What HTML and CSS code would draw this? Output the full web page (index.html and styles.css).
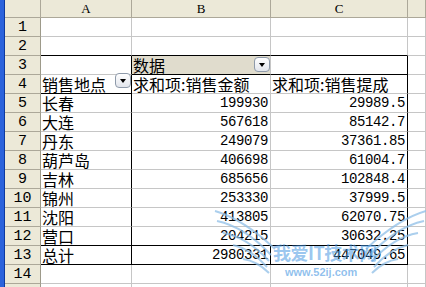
FILE: index.html
```html
<!DOCTYPE html>
<html>
<head>
<meta charset="utf-8">
<link rel="stylesheet" href="styles.css">
</head>
<body>
<div class="app">
  <div class="strip"></div>
  <div class="sheet">
    <div class="grid">
      <div class="h corner"></div><div class="h col">A</div><div class="h col">B</div><div class="h col">C</div><div class="h col"></div>

      <div class="rh">1</div><div class="c"></div><div class="c"></div><div class="c"></div><div class="c"></div>
      <div class="rh">2</div><div class="c bb"></div><div class="c bb"></div><div class="c bb"></div><div class="c"></div>
      <div class="rh">3</div><div class="c br"></div><div class="c bb field"><span class="t">数据</span><span class="dd dd-b"></span></div><div class="c bb br"></div><div class="c"></div>
      <div class="rh">4</div><div class="c bb br"><span class="t">销售地点</span><span class="dd dd-a"></span></div><div class="c"><span class="t">求和项:销售金额</span></div><div class="c br"><span class="t">求和项:销售提成</span></div><div class="c"></div>

      <div class="rh">5</div><div class="c br"><span class="t">长春</span></div><div class="c num">199930</div><div class="c num br">29989.5</div><div class="c"></div>
      <div class="rh">6</div><div class="c br"><span class="t">大连</span></div><div class="c num">567618</div><div class="c num br">85142.7</div><div class="c"></div>
      <div class="rh">7</div><div class="c br"><span class="t">丹东</span></div><div class="c num">249079</div><div class="c num br">37361.85</div><div class="c"></div>
      <div class="rh">8</div><div class="c br"><span class="t">葫芦岛</span></div><div class="c num">406698</div><div class="c num br">61004.7</div><div class="c"></div>
      <div class="rh">9</div><div class="c br"><span class="t">吉林</span></div><div class="c num">685656</div><div class="c num br">102848.4</div><div class="c"></div>
      <div class="rh">10</div><div class="c br"><span class="t">锦州</span></div><div class="c num">253330</div><div class="c num br">37999.5</div><div class="c"></div>
      <div class="rh">11</div><div class="c br"><span class="t">沈阳</span></div><div class="c num">413805</div><div class="c num br">62070.75</div><div class="c"></div>
      <div class="rh">12</div><div class="c bb br"><span class="t">营口</span></div><div class="c bb num">204215</div><div class="c bb num br">30632.25</div><div class="c"></div>
      <div class="rh">13</div><div class="c bb br"><span class="t">总计</span></div><div class="c bb br num">2980331</div><div class="c bb num br">447049.65</div><div class="c"></div>
      <div class="rh">14</div><div class="c"></div><div class="c"></div><div class="c"></div><div class="c"></div>
      <div class="rh"></div><div class="c"></div><div class="c"></div><div class="c"></div><div class="c"></div>
    </div>

    <div class="watermark">
      <svg class="wings" width="215" height="80" viewBox="0 0 215 80">
        <g fill="none" stroke="#8fbfe8" stroke-width="2" opacity="0.75">
          <path d="M2 6 Q30 14 62 44"/>
          <path d="M4 16 Q32 22 58 50"/>
          <path d="M10 28 Q34 32 56 56"/>
          <path d="M20 40 Q38 44 54 62"/>
          <path d="M30 54 Q44 56 56 68"/>
          <path d="M213 6 Q185 14 153 44"/>
          <path d="M211 16 Q183 22 157 50"/>
          <path d="M205 28 Q181 32 159 56"/>
          <path d="M195 40 Q177 44 161 62"/>
          <path d="M185 54 Q171 56 159 68"/>
        </g>
      </svg>
      <div class="wm-title">我爱IT技术网</div>
      <div class="wm-url">www.52ij.com</div>
    </div>
  </div>
</div>
</body>
</html>
```
FILE: styles.css
```css
html, body {
  margin: 0;
  padding: 0;
  background: #ffffff;
}
body {
  width: 426px;
  height: 287px;
  overflow: hidden;
  font-family: "Noto Sans CJK SC", "Liberation Sans", sans-serif;
}
.app {
  display: flex;
  height: 287px;
}
.strip {
  width: 4px;
  flex: none;
  background: #2b63dc;
  border-right: 1px solid #0d3aa0;
}
.sheet {
  position: relative;
  flex: 1;
  overflow: hidden;
}
.grid {
  display: grid;
  grid-template-columns: 36px 91px 139px 137px 1fr;
  grid-template-rows: 18px repeat(15, 19px);
}
.grid > div {
  box-sizing: border-box;
  border-right: 1px solid #c6c6c6;
  border-bottom: 1px solid #c6c6c6;
  position: relative;
  overflow: visible;
  white-space: nowrap;
}
.h {
  background: #ece9d8;
  border-right-color: #aca899 !important;
  border-bottom-color: #aca899 !important;
  font-family: "Liberation Serif", serif;
  font-size: 13px;
  line-height: 18px;
  text-align: center;
  color: #000;
}
.rh {
  background: #ece9d8;
  border-right-color: #9d9a8a !important;
  border-bottom-color: #aca899 !important;
  font-family: "Liberation Mono", monospace;
  font-size: 15px;
  line-height: 19px;
  text-align: center;
  color: #000;
}
.c {
  font-size: 16px;
  line-height: 18px;
  color: #000;
  padding: 0 1px;
}
.c .t {
  display: block;
  line-height: 18px;
}
.num {
  text-align: right;
  font-family: "Liberation Mono", monospace;
  font-size: 14px;
  letter-spacing: -0.4px;
  line-height: 19px;
  padding-right: 2px;
}
.grid > .bb {
  border-bottom-color: #000;
}
.grid > .br {
  border-right-color: #000;
}
.field {
  background: #e0dccd;
}
.dd {
  position: absolute;
  width: 16px;
  height: 15px;
  box-sizing: border-box;
  border: 1px solid #8e9aaa;
  border-radius: 4px;
  background: linear-gradient(#ffffff, #e2e5ec);
  z-index: 2;
}
.dd::after {
  content: "";
  position: absolute;
  left: 3.5px;
  top: 5px;
  border-left: 3.5px solid transparent;
  border-right: 3.5px solid transparent;
  border-top: 4px solid #000;
}
.dd-b {
  right: 0;
  top: 1px;
}
.dd-a {
  right: 0;
  top: -2px;
}
.watermark {
  position: absolute;
  left: 208px;
  top: 205px;
  width: 215px;
  height: 80px;
  pointer-events: none;
}
.wings {
  position: absolute;
  left: 0;
  top: 0;
}
.wm-title {
  position: absolute;
  left: 60px;
  top: 36px;
  font-size: 18px;
  line-height: 22px;
  font-weight: bold;
  color: rgba(70, 150, 225, 0.55);
  letter-spacing: -0.5px;
}
.wm-url {
  position: absolute;
  left: 72px;
  top: 61px;
  font-family: "Liberation Sans", sans-serif;
  font-size: 11px;
  line-height: 13px;
  font-weight: bold;
  color: rgba(70, 150, 225, 0.6);
}
```
